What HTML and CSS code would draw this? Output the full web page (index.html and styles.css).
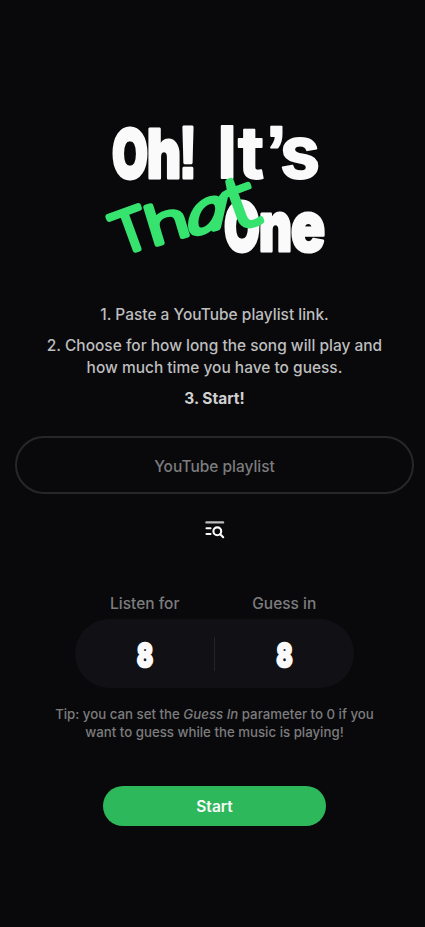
FILE: index.html
```
<!DOCTYPE html>
<html lang="en">
<head>
<meta charset="utf-8">
<meta name="viewport" content="width=device-width, initial-scale=1">
<title>Oh! It’s That One</title>
<link rel="stylesheet" href="styles.css">
</head>
<body>
<main class="app">
  <svg class="logo" viewBox="0 0 225 140" role="img" aria-label="Oh! It’s That One">
    <g class="logo-white">
      <text x="10" y="60" textLength="36" lengthAdjust="spacingAndGlyphs">O</text>
      <text x="45" y="60" textLength="34" lengthAdjust="spacingAndGlyphs">h</text>
      <text class="logo-mark" x="76" y="60" textLength="20" lengthAdjust="spacingAndGlyphs">!</text>
      <g class="logo-its">
        <text x="115" y="60">I</text>
        <text x="136" y="60" textLength="26" lengthAdjust="spacingAndGlyphs">t</text>
        <text class="logo-mark" x="164" y="60">’</text>
        <text x="178" y="60" textLength="40" lengthAdjust="spacingAndGlyphs">s</text>
      </g>
      <text x="122" y="132.5" textLength="36" lengthAdjust="spacingAndGlyphs">O</text>
      <text x="157" y="132.5" textLength="33" lengthAdjust="spacingAndGlyphs">n</text>
      <text x="189" y="132.5" textLength="34" lengthAdjust="spacingAndGlyphs">e</text>
    </g>
    <g class="logo-green">
      <text transform="translate(20 137) rotate(-20) scale(1.08 1)">T</text>
      <text transform="translate(50 128) rotate(-17) scale(1.25 .9)">h</text>
      <text class="logo-slant" transform="translate(86 118) rotate(-15) skewX(-14) scale(1.3 .98)">a</text>
      <text class="logo-cross" transform="translate(134 113) rotate(-20) scale(1.55 1.32)">t</text>
    </g>
  </svg>

  <ol class="steps">
    <li>1. Paste a YouTube playlist link.</li>
    <li>2. Choose for how long the song will play and<br>how much time you have to guess.</li>
    <li class="steps-last">3. Start!</li>
  </ol>

  <input class="playlist" type="text" placeholder="YouTube playlist" aria-label="YouTube playlist">

  <button class="search" type="button" aria-label="Search playlists">
    <svg viewBox="0 0 22 22" width="22" height="22">
      <path class="bar" d="M2.5 3.4H19"/>
      <path d="M2.5 9.2H6.5M2.5 15H6.5M16.2 15.2L19.2 18.2"/>
      <circle cx="13.3" cy="12.3" r="3.9"/>
    </svg>
  </button>

  <section class="timing">
    <div class="labels"><span>Listen for</span><span>Guess in</span></div>
    <div class="values">
      <svg viewBox="0 0 30 40"><text x="7" y="33" textLength="16" lengthAdjust="spacingAndGlyphs">8</text></svg>
      <i class="divider"></i>
      <svg viewBox="0 0 30 40"><text x="6.5" y="33" textLength="16" lengthAdjust="spacingAndGlyphs">8</text></svg>
    </div>
  </section>

  <p class="tip">Tip: you can set the <em>Guess In</em> parameter to 0 if you<br>want to guess while the music is playing!</p>
  <button class="start" type="button">Start</button>
</main>
</body>
</html>
```
FILE: styles.css
```
* { box-sizing: border-box; }
body {
  margin: 0;
  background: #09090b;
  color: #fafafa;
  font-family: Inter, "Liberation Sans", sans-serif;
  font-weight: 500;
}
.app {
  min-height: 927px;
  padding: 118px 11px 0 15px;
  display: flex;
  flex-direction: column;
  align-items: center;
}
.logo { width: 225px; height: 140px; overflow: visible; }
.logo-white {
  fill: #fafafa;
  stroke: #fafafa;
  stroke-width: 3;
  stroke-linejoin: round;
  font-size: 68px;
  font-weight: 900;
}
.logo-its { font-weight: 700; stroke-width: 1.8; font-size: 72px; }
.logo-mark { font-family: "Liberation Sans", sans-serif; font-size: 74px; font-weight: 700; }
.logo-green {
  fill: #36e36f;
  stroke: #36e36f;
  stroke-width: 5.4;
  stroke-linejoin: round;
  font-family: "Open Sans", sans-serif;
  font-size: 57px;
  font-weight: 300;
}
.logo-slant { font-style: italic; }
.logo-cross { stroke-width: 3.6; }
.steps {
  list-style: none;
  margin: 46px 0 0;
  padding: 0;
  display: flex;
  flex-direction: column;
  gap: 9px;
  text-align: center;
  white-space: nowrap;
  color: #bebebf;
  font-size: 15.47px;
  line-height: 22px;
}
.steps-last { font-weight: 700; color: #d0d0d1; }
.playlist {
  width: 399px;
  height: 58px;
  margin-top: 26px;
  padding: 2px 0 0;
  border: 2px solid #27272a;
  border-radius: 29px;
  background: transparent;
  text-align: center;
  font: inherit;
  font-size: 15.47px;
}
.playlist::placeholder { color: #7c7c7e; opacity: 1; }
.search {
  width: 22px;
  height: 22px;
  margin-top: 25px;
  padding: 0;
  border: 0;
  background: none;
}
.search svg {
  display: block;
  fill: none;
  stroke: #fafafa;
  stroke-width: 2.1;
  stroke-linecap: round;
}
.search .bar { stroke: #bcbcbd; stroke-width: 2.4; }
.timing { width: 279px; margin-top: 52px; }
.labels {
  display: grid;
  grid-template-columns: 1fr 1fr;
  text-align: center;
  color: #7c7c7e;
  font-size: 15.47px;
  line-height: 22px;
}
.values {
  height: 69px;
  margin: 4px 0 1px;
  border-radius: 35px;
  background: #111115;
  display: grid;
  grid-template-columns: 1fr 1px 1fr;
  align-items: center;
  justify-items: center;
}
.values svg { width: 30px; height: 40px; overflow: visible; }
.values text {
  font-size: 33px;
  font-weight: 900;
  fill: #fafafa;
  stroke: #fafafa;
  stroke-width: 2.6;
}
.divider { width: 1px; height: 34px; background: #242428; }
.tip {
  margin: 16px 0 0;
  text-align: center;
  white-space: nowrap;
  color: #7c7c7e;
  font-size: 13.25px;
  line-height: 18px;
}
.start {
  width: 223px;
  height: 40px;
  margin-top: 45px;
  border: 0;
  border-radius: 20px;
  background: #2eb85c;
  color: #fafafa;
  font: inherit;
  font-size: 15.47px;
  font-weight: 600;
}
```
